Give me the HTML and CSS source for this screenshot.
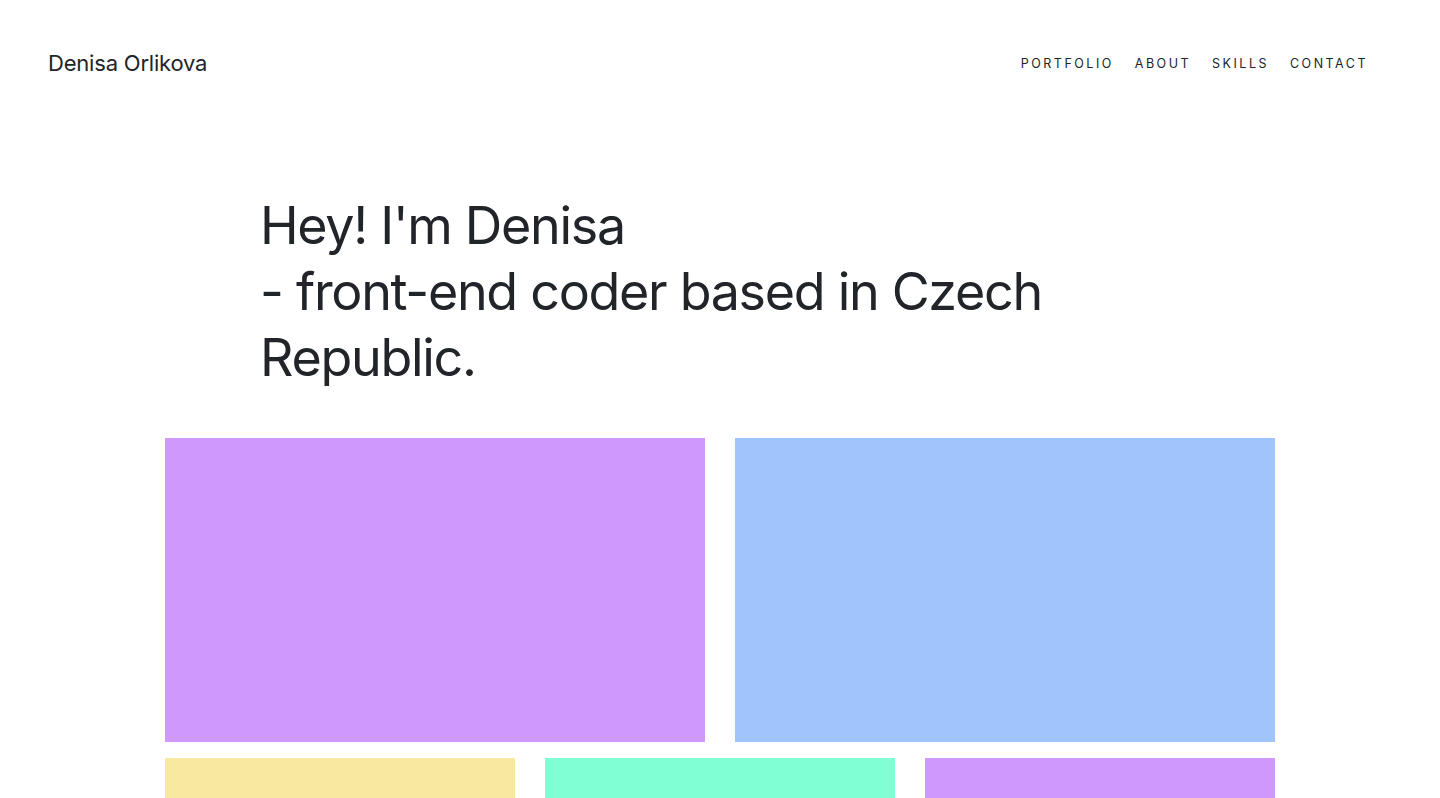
FILE: index.html
```html
<!DOCTYPE html>
<html lang="en">
<head>
<meta charset="utf-8">
<title>Denisa Orlikova</title>
<link rel="stylesheet" href="styles.css">
</head>
<body>
<header class="header">
  <a class="logo" href="#">Denisa Orlikova</a>
  <nav class="nav">
    <a href="#">Portfolio</a>
    <a href="#">About</a>
    <a href="#">Skills</a>
    <a href="#">Contact</a>
  </nav>
</header>
<main class="main">
  <h1 class="intro">Hey! I'm Denisa<br>- front-end coder based in Czech Republic.</h1>
  <section class="grid">
    <div class="row two">
      <div class="tile purple"></div>
      <div class="tile blue"></div>
    </div>
    <div class="row three">
      <div class="tile yellow"></div>
      <div class="tile mint"></div>
      <div class="tile purple"></div>
    </div>
  </section>
</main>
</body>
</html>
```
FILE: styles.css
```css
* { box-sizing: border-box; }
html, body { margin: 0; padding: 0; }
body {
  font-family: Inter, "Noto Sans", sans-serif;
  color: #212529;
  background: #fff;
}
a { color: inherit; text-decoration: none; }
.header {
  display: flex;
  justify-content: space-between;
  align-items: center;
  height: 126px;
  padding: 0 72px 0 48px;
}
.logo {
  font-size: 22px;
  letter-spacing: -0.2px;
}
.nav {
  display: flex;
  gap: 21px;
}
.nav a {
  font-size: 12.5px;
  text-transform: uppercase;
  letter-spacing: 2.5px;
}
.main {
  width: 1110px;
  margin: 0 auto;
}
.intro {
  margin: 67px 0 0;
  padding: 0 0 0 95px;
  max-width: 900px;
  font-size: 52px;
  font-weight: 400;
  line-height: 66px;
  letter-spacing: -1.3px;
}
.grid {
  margin-top: 47px;
  display: flex;
  flex-direction: column;
  gap: 16px;
}
.row { display: flex; gap: 30px; }
.tile { flex: 1; height: 304px; }
.purple { background: #cf98fb; }
.blue { background: #a0c4fc; }
.yellow { background: #f9e8a0; }
.mint { background: #80ffd4; }
```
